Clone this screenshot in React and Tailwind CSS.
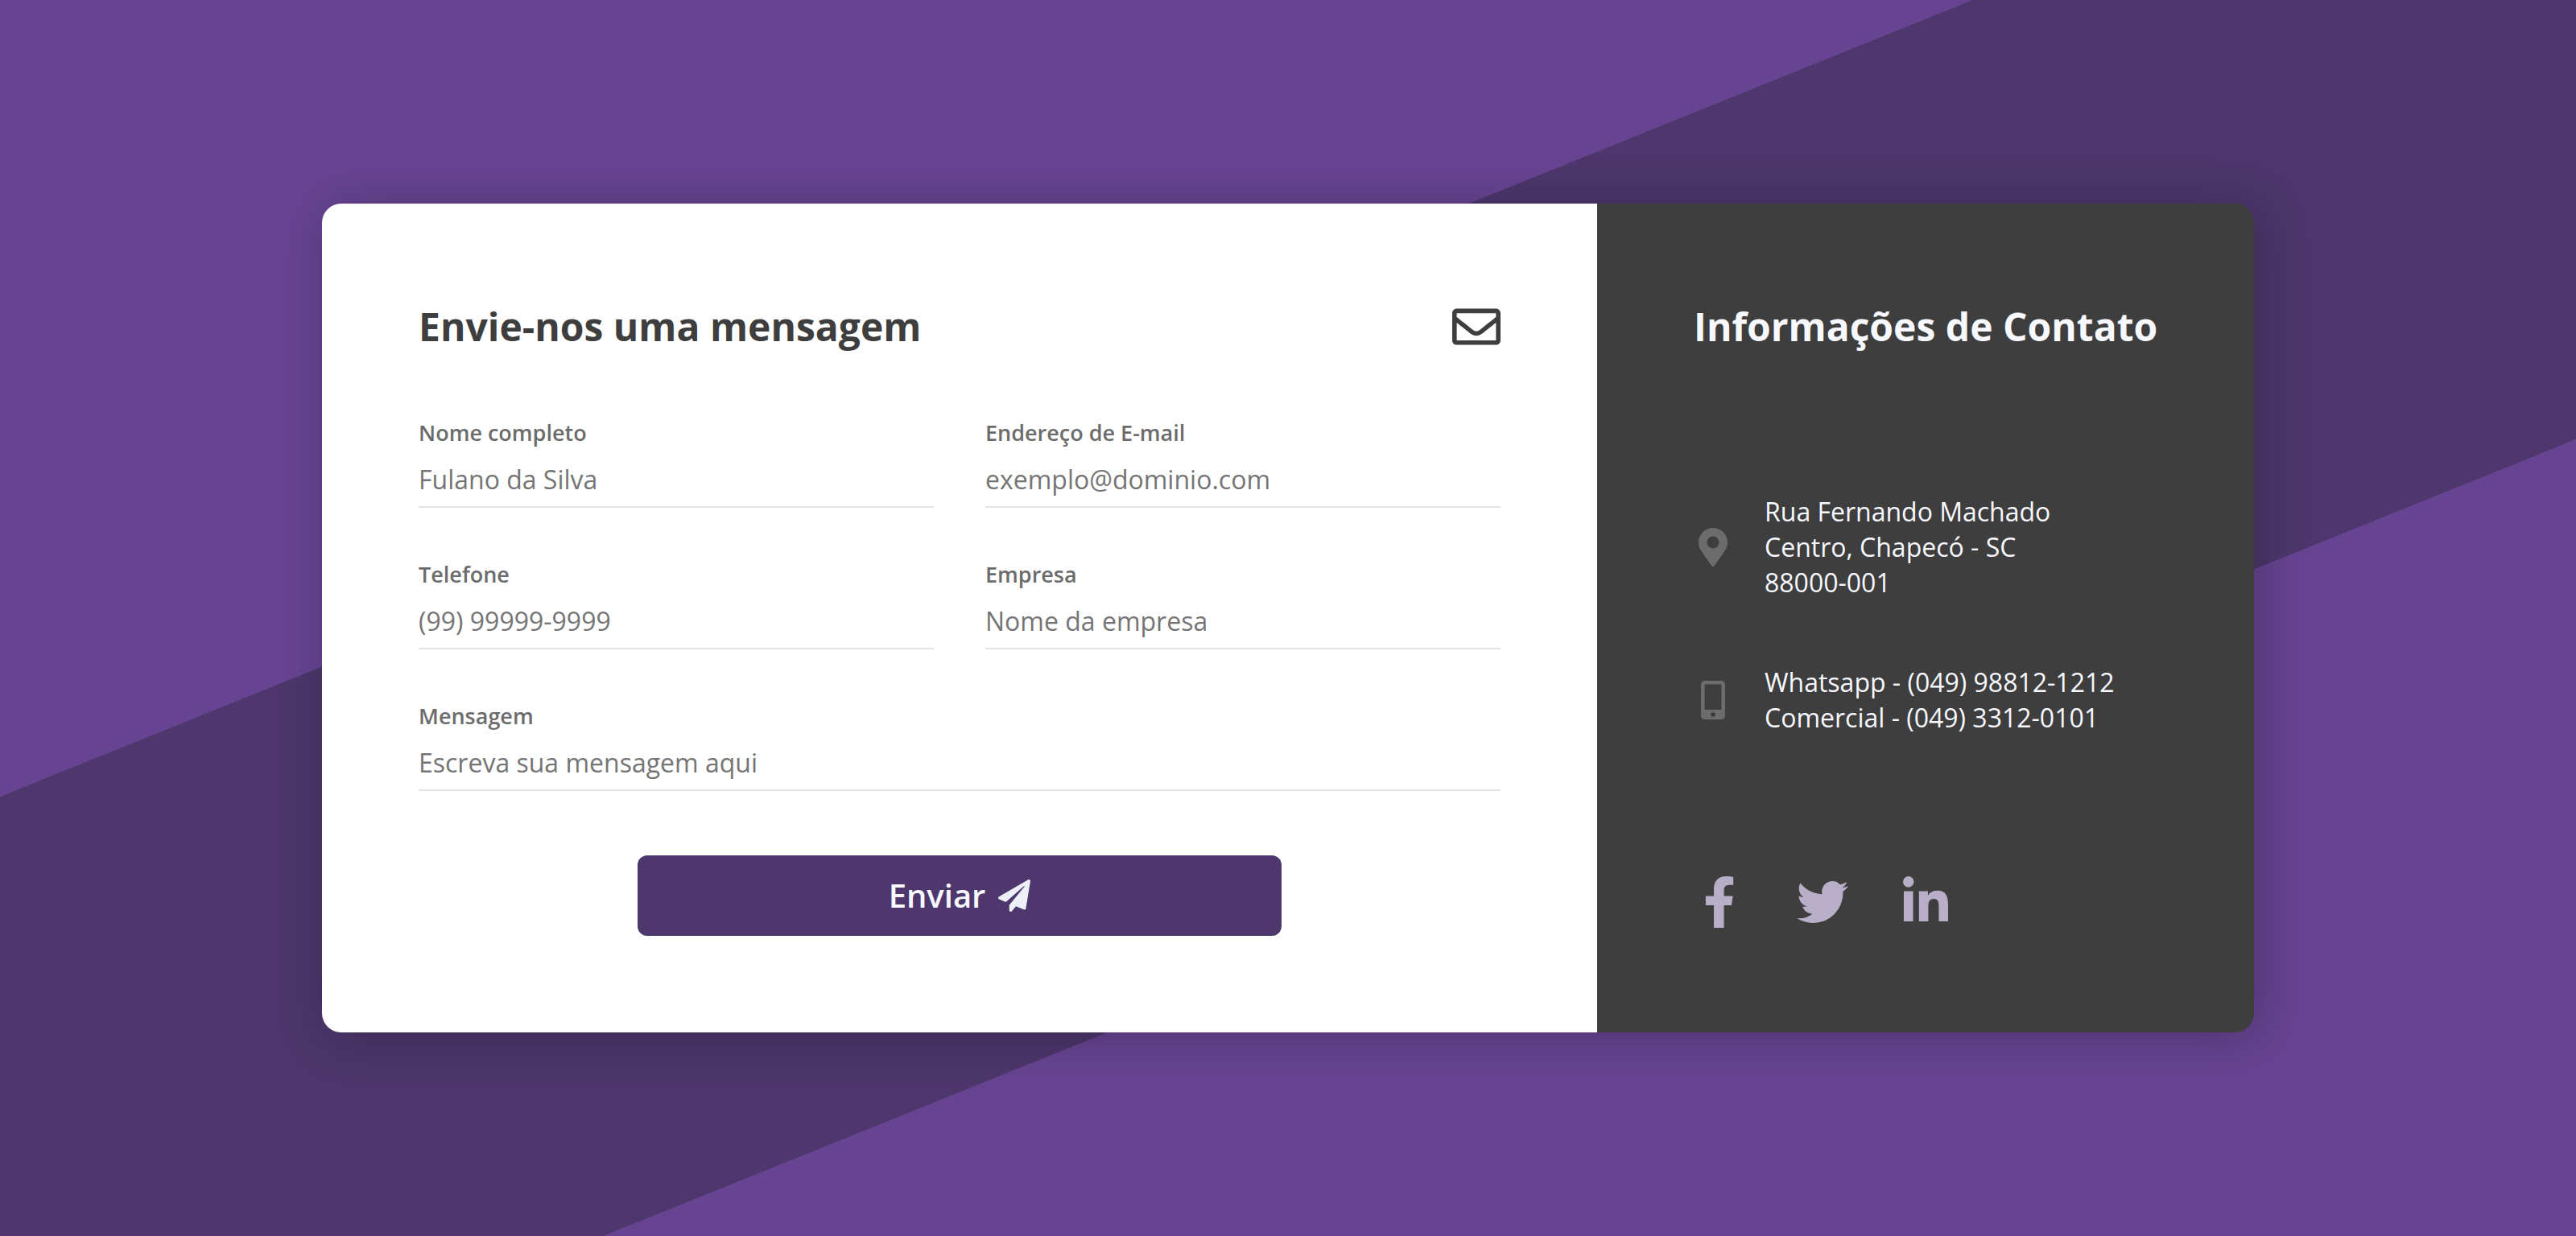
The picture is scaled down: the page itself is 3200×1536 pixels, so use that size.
import {
  FaFacebookF,
  FaLinkedinIn,
  FaMapMarkerAlt,
  FaMobileAlt,
  FaPaperPlane,
  FaRegEnvelope,
  FaTwitter,
} from "react-icons/fa";

const fields = [
  { id: "name", label: "Nome completo", placeholder: "Fulano da Silva", type: "text" },
  { id: "email", label: "Endereço de E-mail", placeholder: "exemplo@dominio.com", type: "email" },
  { id: "phone", label: "Telefone", placeholder: "(99) 99999-9999", type: "tel" },
  { id: "company", label: "Empresa", placeholder: "Nome da empresa", type: "text" },
  { id: "message", label: "Mensagem", placeholder: "Escreva sua mensagem aqui", type: "text", wide: true },
];

const contacts = [
  {
    Icon: FaMapMarkerAlt,
    lines: ["Rua Fernando Machado", "Centro, Chapecó - SC", "88000-001"],
  },
  {
    Icon: FaMobileAlt,
    lines: ["Whatsapp - (049) 98812-1212", "Comercial - (049) 3312-0101"],
  },
];

const socials = [
  { name: "Facebook", Icon: FaFacebookF },
  { name: "Twitter", Icon: FaTwitter },
  { name: "LinkedIn", Icon: FaLinkedinIn },
];

function Field({ id, label, placeholder, type, wide }) {
  return (
    <div className={wide ? "col-span-2 flex flex-col gap-4" : "flex flex-col gap-4"}>
      <label htmlFor={id} className="text-[27px] leading-[38px] font-semibold text-[#6c6c6c]">
        {label}
      </label>
      <input
        id={id}
        type={type}
        placeholder={placeholder}
        className="h-[58px] w-full border-b-2 border-[#e5e5e5] bg-transparent pb-3 text-[32px] leading-[44px] text-[#3e3e3e] outline-none placeholder:text-[#757575]"
      />
    </div>
  );
}

export default function App() {
  return (
    <main className="flex min-h-screen items-center justify-center bg-[linear-gradient(158deg,#674492_35%,#4d376c_35%,#4d376c_65%,#674492_65%)] font-['Open_Sans',sans-serif]">
      <div className="flex w-3/4 overflow-hidden rounded-3xl shadow-[6px_6px_64px_rgba(0,0,0,0.25)]">
        <section className="w-[66%] bg-white p-[120px]">
          <header className="mb-20 flex h-[66px] items-center justify-between text-[#3e3e3e]">
            <h1 className="text-5xl leading-[66px] font-bold">Envie-nos uma mensagem</h1>
            <FaRegEnvelope className="size-[60px]" />
          </header>
          <form>
            <div className="grid grid-cols-2 gap-16">
              {fields.map((field) => (
                <Field key={field.id} {...field} />
              ))}
            </div>
            <button
              type="button"
              className="mx-auto mt-20 flex h-[100px] w-full max-w-[800px] items-center justify-center gap-4 rounded-xl bg-[#4d376c] text-[40px] leading-[54px] font-semibold text-[#f8f8ff]"
            >
              Enviar
              <FaPaperPlane className="size-10 text-[#edf0f7]" />
            </button>
          </form>
        </section>

        <aside className="flex w-[34%] flex-col justify-between bg-[#3e3e3e] p-[120px] text-[#f8f8ff]">
          <h2 className="text-5xl leading-[66px] font-bold whitespace-nowrap">Informações de Contato</h2>
          <ul className="flex flex-col gap-20">
            {contacts.map(({ Icon, lines }) => (
              <li key={lines[0]} className="flex items-center gap-10">
                <Icon className="size-12 shrink-0 text-[#6c6c6c]" />
                <p className="text-[32px] leading-[44px] whitespace-nowrap">
                  {lines.map((line) => (
                    <span key={line} className="block">
                      {line}
                    </span>
                  ))}
                </p>
              </li>
            ))}
          </ul>
          <nav className="flex gap-16 pb-2.5" aria-label="Redes sociais">
            {socials.map(({ name, Icon }) => (
              <a key={name} href="#" aria-label={name} className="text-[#b8aec8]">
                <Icon className="size-16" />
              </a>
            ))}
          </nav>
        </aside>
      </div>
    </main>
  );
}
